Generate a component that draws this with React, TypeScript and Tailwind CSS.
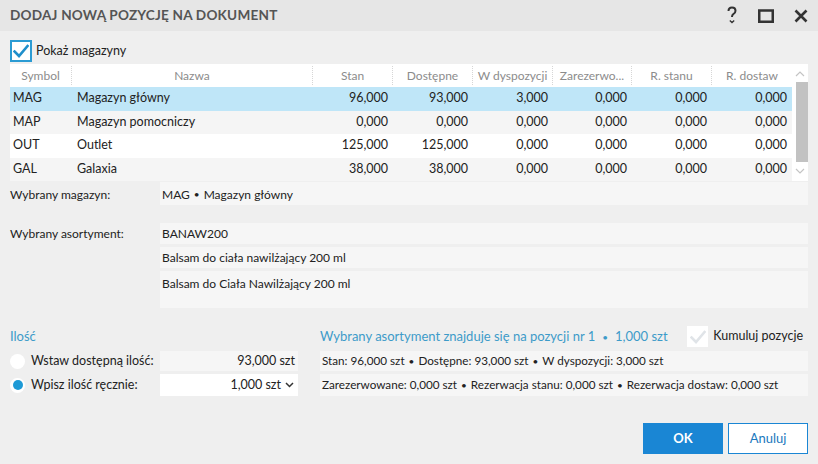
import React from 'react';

interface Row { sym: string; name: string; vals: string[] }

const rows: Row[] = [
  { sym: 'MAG', name: 'Magazyn główny', vals: ['96,000', '93,000', '3,000', '0,000', '0,000', '0,000'] },
  { sym: 'MAP', name: 'Magazyn pomocniczy', vals: ['0,000', '0,000', '0,000', '0,000', '0,000', '0,000'] },
  { sym: 'OUT', name: 'Outlet', vals: ['125,000', '125,000', '0,000', '0,000', '0,000', '0,000'] },
  { sym: 'GAL', name: 'Galaxia', vals: ['38,000', '38,000', '0,000', '0,000', '0,000', '0,000'] },
];

const rowBg = ['bg-[#bfe6f8]', 'bg-[#f5f5f5]', 'bg-white', 'bg-[#f5f5f5]'];
const headers = ['Stan', 'Dostępne', 'W dyspozycji', 'Zarezerwo...', 'R. stanu', 'R. dostaw'];
const cols = 'grid grid-cols-[62px_241px_80px_80px_80px_79px_80px_80px]';

function Check({ color, className }: { color: string; className?: string }) {
  return (
    <svg width="16" height="14" viewBox="0 0 16 14" className={className}>
      <path d="M1.5 7.5 L6 12 L14.5 2" fill="none" stroke={color} strokeWidth="2.6" strokeLinecap="square" />
    </svg>
  );
}

function Dot({ wide }: { wide?: boolean }) {
  return <span className={`text-[10px] ${wide ? 'mx-[7px]' : 'mx-[4px]'}`}>•</span>;
}

function TitleIcons() {
  return (
    <div className="flex items-center gap-[20px] pr-[2px]">
      <svg width="12" height="20" viewBox="0 0 12 20">
        <path d="M2.5 5 Q2.5 1.5 6 1.5 Q9.5 1.5 9.5 4.8 Q9.5 7 7.3 8.2 Q6 9 6 11" fill="none" stroke="#333" strokeWidth="2" />
        <path d="M3.8 14.5 L6 16.5 L8.2 14.5" fill="none" stroke="#333" strokeWidth="1.3" />
      </svg>
      <svg width="16" height="14" viewBox="0 0 16 14">
        <rect x="1.25" y="1.5" width="13.5" height="11.25" fill="none" stroke="#333" strokeWidth="2.5" />
      </svg>
      <svg width="14" height="14" viewBox="0 0 14 14">
        <path d="M1.5 1.5 L12.5 12.5 M12.5 1.5 L1.5 12.5" stroke="#333" strokeWidth="2.6" />
      </svg>
    </div>
  );
}

function Scrollbar() {
  return (
    <div className="w-[16px] bg-white flex flex-col items-center">
      <svg width="10" height="8" viewBox="0 0 10 8" className="mt-[6px]">
        <path d="M1 6 L5 2 L9 6" fill="none" stroke="#c4c4c4" strokeWidth="1.2" />
      </svg>
      <div className="w-[12px] h-[80px] bg-[#c2c2c2] mt-[4px] ml-[4px]" />
      <svg width="10" height="8" viewBox="0 0 10 8" className="mt-[5px]">
        <path d="M1 2 L5 6 L9 2" fill="none" stroke="#c4c4c4" strokeWidth="1.2" />
      </svg>
    </div>
  );
}

function Field({ children, className }: { children?: React.ReactNode; className?: string }) {
  return <div className={`bg-[#f6f6f6] px-[2px] flex items-center whitespace-nowrap ${className ?? ''}`}>{children}</div>;
}

export default function App() {
  return (
    <div
      className="w-[818px] h-[464px] bg-[#efefef] text-[12px] text-[#222] flex flex-col overflow-hidden whitespace-nowrap"
      style={{ fontFamily: 'Lato, "Open Sans", sans-serif' }}
    >
      <div className="h-[31px] bg-[#e6e6e6] flex items-center justify-between pl-[10px] pr-[8px] shrink-0">
        <span className="text-[13.6px] font-bold text-[#555] tracking-[0.2px]">DODAJ NOWĄ POZYCJĘ NA DOKUMENT</span>
        <TitleIcons />
      </div>

      <div className="px-[10px] flex flex-col">
        <div className="flex items-center h-[22px] mt-[9px] gap-[4px]">
          <div className="w-[22px] h-[22px] border-[2px] border-[#2b9bd3] bg-white flex items-center justify-center">
            <Check color="#1f8fcb" />
          </div>
          <span className="text-[12.5px]">Pokaż magazyny</span>
        </div>

        <div className="flex mt-[2px] h-[117px]">
          <div className="w-[782px] flex flex-col">
            <div className={`${cols} h-[23px] bg-white text-[#8c8c8c]`}>
              <div className="flex items-center justify-center border-r border-dotted border-[#d6d6d6] my-[2px]">Symbol</div>
              <div className="flex items-center justify-center border-r border-dotted border-[#d6d6d6] my-[2px]">Nazwa</div>
              {headers.map((h, i) => (
                <div
                  key={h}
                  className={`flex items-center justify-center my-[2px] ${i < headers.length - 1 ? 'border-r border-dotted border-[#d6d6d6]' : ''}`}
                >
                  {h}
                </div>
              ))}
            </div>
            {rows.map((r, idx) => (
              <div key={r.sym} className={`${cols} h-[23.5px] text-[12.5px] ${rowBg[idx]}`}>
                <div className="flex items-center pl-[3px]">{r.sym}</div>
                <div className="flex items-center pl-[5px]">{r.name}</div>
                {r.vals.map((v, i) => (
                  <div key={i} className="flex items-center justify-end pr-[5px]">{v}</div>
                ))}
              </div>
            ))}
          </div>
          <Scrollbar />
        </div>

        <div className="grid grid-cols-[150px_1fr] mt-[1px]">
          <div className="h-[23px] flex items-center pt-[2px]">Wybrany magazyn:</div>
          <Field className="h-[23px] pt-[2px]">MAG<Dot />Magazyn główny</Field>
        </div>

        <div className="grid grid-cols-[150px_1fr] mt-[18px]">
          <div className="h-[21px] flex items-center">Wybrany asortyment:</div>
          <div className="flex flex-col gap-[3px]">
            <Field className="h-[21px]">BANAW200</Field>
            <Field className="h-[21px]">Balsam do ciała nawilżający 200 ml</Field>
            <Field className="h-[37px] items-start pt-[4px]">Balsam do Ciała Nawilżający 200 ml</Field>
          </div>
        </div>

        <div className="flex mt-[18px]">
          <div className="w-[310px] shrink-0 flex flex-col">
            <div className="h-[21px] flex items-center text-[13px] text-[#3d9bc9]">Ilość</div>
            <div className="flex items-center h-[20px] mt-[4px]">
              <div className="w-[150px] flex items-center gap-[6px]">
                <div className="w-[15px] h-[15px] rounded-full bg-white" />
                <span className="text-[12.5px]">Wstaw dostępną ilość:</span>
              </div>
              <Field className="w-[138px] h-[20px] justify-end pr-[3px] text-[12.5px]">93,000 szt</Field>
            </div>
            <div className="flex items-center h-[22px] mt-[3px]">
              <div className="w-[150px] flex items-center gap-[6px]">
                <div className="w-[15px] h-[15px] rounded-full bg-white flex items-center justify-center">
                  <div className="w-[10px] h-[10px] rounded-full bg-[#1e9ad6]" />
                </div>
                <span className="text-[12.5px]">Wpisz ilość ręcznie:</span>
              </div>
              <div className="w-[138px] h-[22px] bg-white flex items-center justify-end pr-[4px] gap-[4px] text-[12.5px]">
                <span>1,000 szt</span>
                <svg width="9" height="6" viewBox="0 0 9 6">
                  <path d="M1 1 L4.5 4.5 L8 1" fill="none" stroke="#333" strokeWidth="1.5" />
                </svg>
              </div>
            </div>
          </div>

          <div className="flex-1 min-w-0 flex flex-col">
            <div className="h-[21px] flex items-center justify-between">
              <span className="text-[13px] text-[#3d9bc9]">
                Wybrany asortyment znajduje się na pozycji nr 1<Dot wide />1,000 szt
              </span>
              <div className="flex items-center gap-[5px] pr-[5px]">
                <div className="w-[21px] h-[21px] bg-white flex items-center justify-center">
                  <Check color="#e0e4e8" />
                </div>
                <span className="text-[12.5px]">Kumuluj pozycje</span>
              </div>
            </div>
            <Field className="h-[20px] mt-[4px] text-[11.7px]">
              Stan: 96,000 szt<Dot />Dostępne: 93,000 szt<Dot />W dyspozycji: 3,000 szt
            </Field>
            <Field className="h-[22px] mt-[3px] text-[11.7px]">
              Zarezerwowane: 0,000 szt<Dot />Rezerwacja stanu: 0,000 szt<Dot />Rezerwacja dostaw: 0,000 szt
            </Field>
          </div>
        </div>

        <div className="flex justify-end gap-[5px] mt-[27px] text-[13px]">
          <button className="w-[80px] h-[31px] bg-[#1a86d4] text-white font-bold">OK</button>
          <button className="w-[80px] h-[31px] bg-white border border-[#1a86d4] text-[#1a78bd]">Anuluj</button>
        </div>
      </div>
    </div>
  );
}
